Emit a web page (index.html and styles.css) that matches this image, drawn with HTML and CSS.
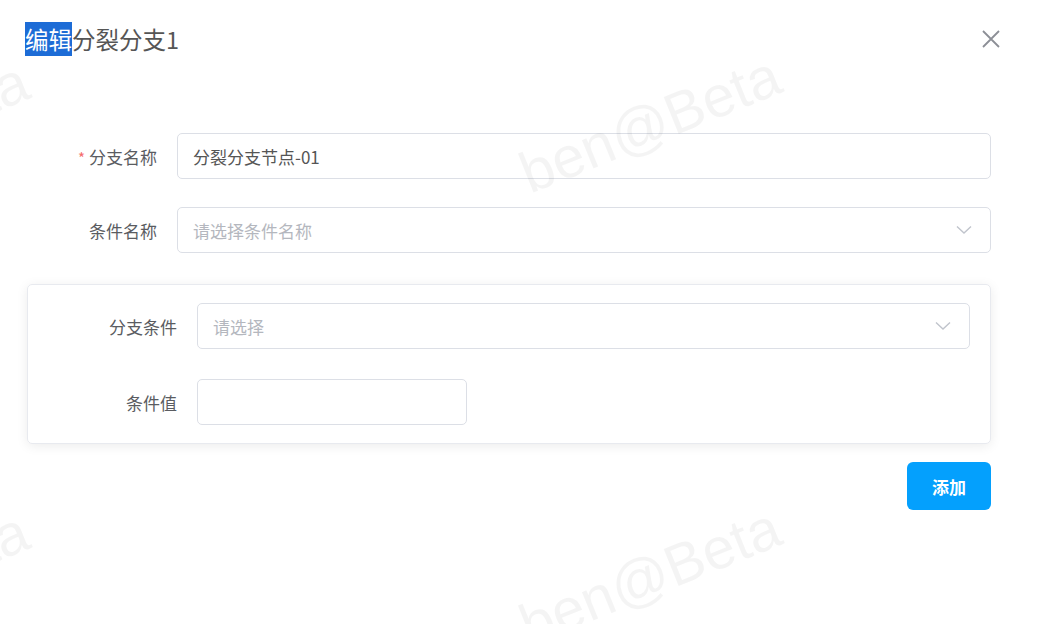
FILE: index.html
```html
<!DOCTYPE html>
<html lang="zh">
<head>
<meta charset="utf-8">
<title>编辑分裂分支1</title>
<link rel="stylesheet" href="styles.css">
</head>
<body>
<div class="dialog">
  <div class="watermark wm1">ben@Beta</div>
  <div class="watermark wm2">ben@Beta</div>
  <div class="watermark wm3">ben@Beta</div>
  <div class="watermark wm4">ben@Beta</div>

  <header class="dialog-header">
    <span class="title"><span class="sel">编辑</span>分裂分支1</span>
    <span class="close">
      <svg width="20" height="20" viewBox="0 0 20 20"><path d="M2 2 L18 18 M18 2 L2 18" stroke="#8c8f96" stroke-width="1.8" fill="none"/></svg>
    </span>
  </header>

  <div class="form">
    <div class="row">
      <label class="label"><span class="star">*</span>分支名称</label>
      <div class="field">分裂分支节点-01</div>
    </div>
    <div class="row">
      <label class="label">条件名称</label>
      <div class="field select placeholder">请选择条件名称
        <svg class="chev" width="16" height="10" viewBox="0 0 16 10"><path d="M1 1.5 L8 8 L15 1.5" stroke="#c0c4cc" stroke-width="1.4" fill="none"/></svg>
      </div>
    </div>

    <div class="card">
      <div class="row">
        <label class="label">分支条件</label>
        <div class="field select placeholder">请选择
          <svg class="chev" width="16" height="10" viewBox="0 0 16 10"><path d="M1 1.5 L8 8 L15 1.5" stroke="#c0c4cc" stroke-width="1.4" fill="none"/></svg>
        </div>
      </div>
      <div class="row">
        <label class="label">条件值</label>
        <div class="field short"></div>
      </div>
    </div>

    <div class="actions">
      <button class="btn">添加</button>
    </div>
  </div>
</div>
</body>
</html>
```

FILE: styles.css
```css
html, body {
  margin: 0;
  padding: 0;
  background: #ffffff;
}
body {
  font-family: "Noto Sans CJK SC", "Liberation Sans", sans-serif;
  color: #606266;
}
.dialog {
  position: relative;
  width: 1038px;
  height: 624px;
  overflow: hidden;
}
.watermark {
  position: absolute;
  font-family: "Liberation Sans", sans-serif;
  font-size: 58px;
  color: rgba(0, 0, 0, 0.045);
  white-space: nowrap;
  transform: translate(-50%, -50%) rotate(-22deg);
  pointer-events: none;
  line-height: 1;
}
.wm1 { left: 650px; top: 124px; }
.wm2 { left: 650px; top: 576px; }
.wm3 { left: -102px; top: 130px; }
.wm4 { left: -102px; top: 580px; }

.dialog-header {
  height: 80px;
  display: flex;
  justify-content: space-between;
  align-items: flex-start;
  padding: 24px 37px 0 25px;
  box-sizing: border-box;
}
.title {
  font-size: 23.5px;
  line-height: 30px;
  color: #555;
}
.sel {
  background: #1d6cd6;
  color: #fff;
}
.close {
  display: block;
  margin-top: 5px;
  margin-right: 0;
}
.close svg { display: block; }

.form {
  padding: 53px 47px 0 27px;
}
.row {
  display: flex;
  align-items: center;
  margin-bottom: 28px;
}
.label {
  width: 150px;
  padding-right: 20px;
  box-sizing: border-box;
  text-align: right;
  font-size: 17px;
  color: #5a5c61;
  flex: none;
}
.star {
  color: #f56c6c;
  margin-right: 4px;
  font-size: 15px;
}
.field {
  flex: 1;
  height: 46px;
  border: 1px solid #dcdfe6;
  border-radius: 5px;
  box-sizing: border-box;
  padding: 0 15px;
  display: flex;
  align-items: center;
  font-size: 17px;
  color: #555;
}
.placeholder { color: #b4b7be; }
.select { justify-content: space-between; padding-right: 18px; }
.chev { display: block; }
.short { flex: none; width: 270px; }

.card {
  margin-top: 31px;
  border: 1px solid #e8eaef;
  border-radius: 5px;
  box-shadow: 0 2px 12px rgba(0, 0, 0, 0.08);
  padding: 18px 20px 18px 19px;
  width: 964px;
  box-sizing: border-box;
}
.card .row { margin-bottom: 30px; }
.card .row:last-child { margin-bottom: 0; }

.actions {
  display: flex;
  justify-content: flex-end;
  margin-top: 18px;
}
.btn {
  width: 84px;
  height: 48px;
  border: none;
  border-radius: 6px;
  background: #04a0fd;
  color: #fff;
  font-family: "Noto Sans CJK SC", sans-serif;
  font-size: 17px;
  font-weight: 700;
  cursor: pointer;
}
```
